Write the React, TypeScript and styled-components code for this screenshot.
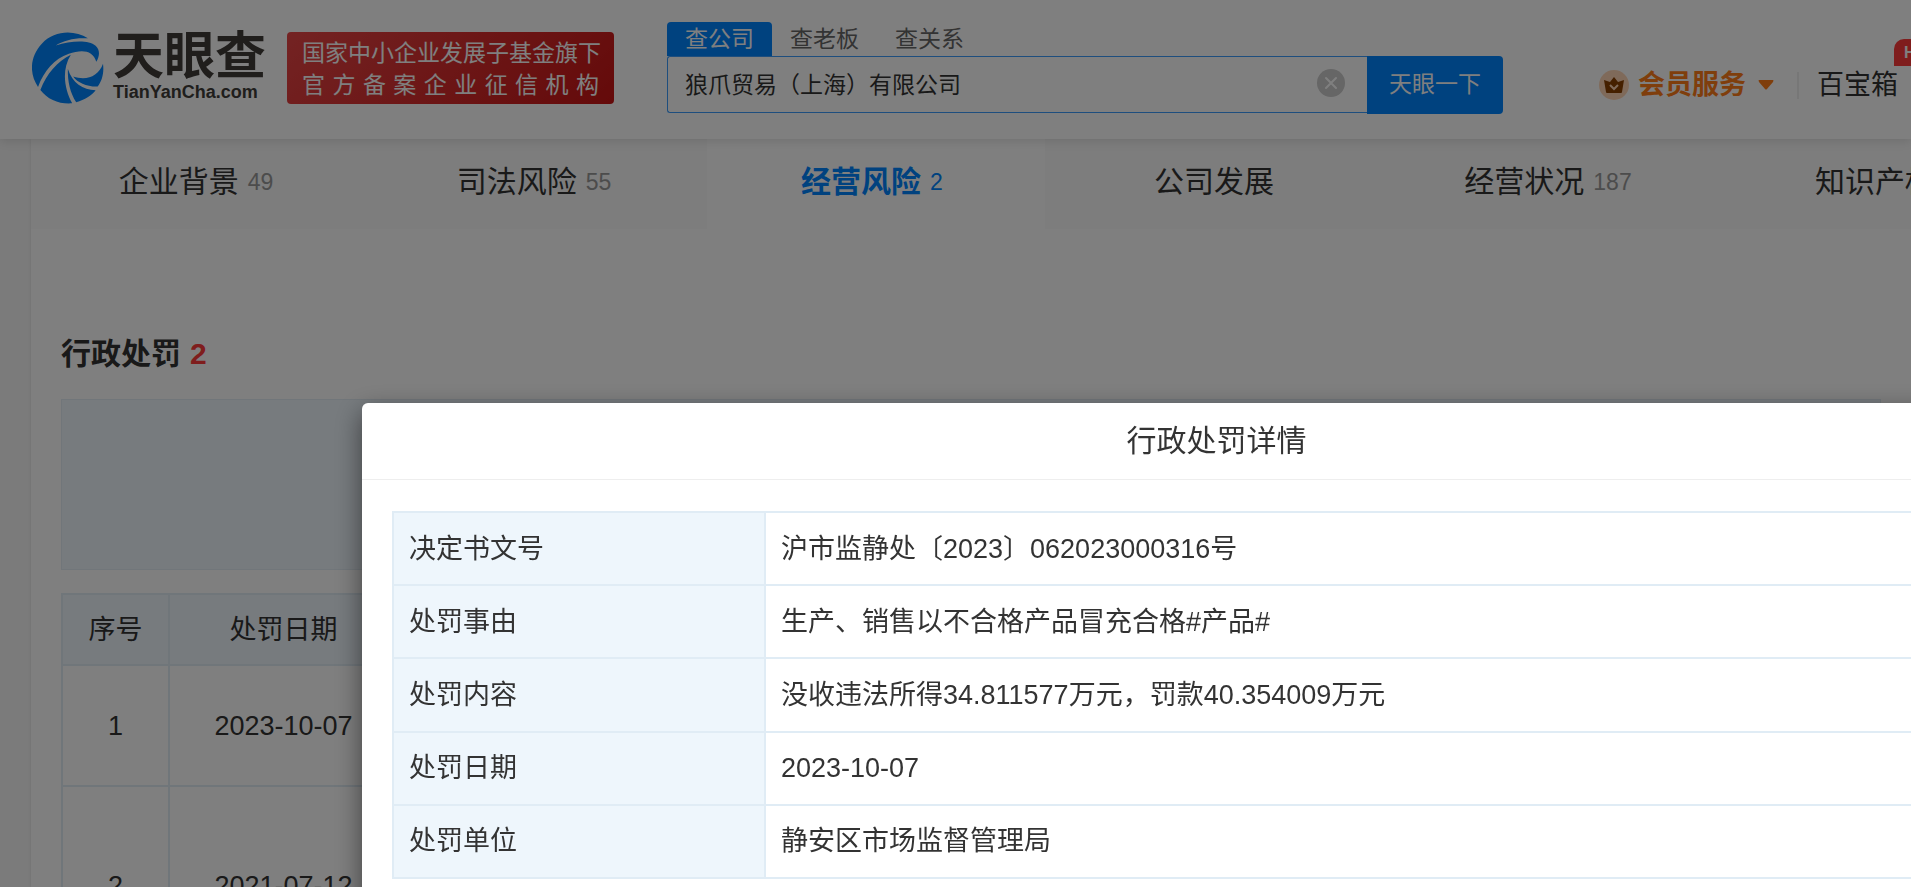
import React from "react";
import styled, { createGlobalStyle } from "styled-components";

const Global = createGlobalStyle`
  * { box-sizing: border-box; }
  html, body, #root { height: 100%; }
  body {
    margin: 0;
    overflow: hidden;
    background: #f6f6f6;
    color: #333;
    font-family: "Liberation Sans", "Noto Sans CJK SC", sans-serif;
    font-size: 27px;
    line-height: 32px;
  }
  button, input { font: inherit; color: inherit; }
  a { color: inherit; text-decoration: none; }
`;

const Page = styled.div`
  height: 100%;
  display: flex;
  flex-direction: column;
  overflow: hidden;
`;

const Header = styled.header`
  flex: none;
  display: flex;
  align-items: flex-start;
  min-width: 0;
  height: 139px;
  padding-left: 32px;
  background: #fff;
  box-shadow: 0 2px 10px rgba(0, 0, 0, 0.12);
  z-index: 1;
`;

const Logo = styled.a`
  flex: none;
  display: flex;
  gap: 9px;
  width: 236px;
  margin-top: 32px;
`;

const LogoWords = styled.span`
  display: flex;
  flex-direction: column;
  color: #403c39;
  font-weight: 700;
`;

const LogoName = styled.span`
  font-size: 51px;
  line-height: 50px;
`;

const LogoDomain = styled.span`
  font-size: 18px;
  line-height: 20px;
`;

const Slogan = styled.div`
  flex: none;
  width: 327px;
  height: 72px;
  margin: 32px 53px 0 19px;
  padding: 5px 15px;
  border-radius: 4px;
  background: linear-gradient(135deg, #e84646, #c91414);
  color: #fff;
  font-size: 23px;
  line-height: 32px;
`;

const SloganLine = styled.p`
  margin: 0;
  white-space: nowrap;
  text-align-last: justify;
`;

const Search = styled.form`
  flex: none;
  width: 836px;
  margin: 22px 0 0;
  font-size: 23px;
`;

const SearchTabs = styled.div`
  display: flex;
`;

const SearchTab = styled.button<{ $active?: boolean }>`
  width: 105px;
  height: 34px;
  padding: 0;
  border: 0;
  border-radius: 4px 4px 0 0;
  line-height: 34px;
  background: ${(p) => (p.$active ? "#0084ff" : "transparent")};
  color: ${(p) => (p.$active ? "#fff" : "#666")};
`;

const SearchRow = styled.div`
  display: flex;
  height: 58px;
`;

const Field = styled.label`
  flex: 1;
  display: flex;
  align-items: center;
  height: 57px;
  padding: 0 22px 0 17px;
  border: 1px solid #3c9dfc;
  border-right: 0;
  border-radius: 3px 0 0 3px;
`;

const FieldInput = styled.input`
  flex: 1;
  min-width: 0;
  padding: 0;
  border: 0;
  outline: 0;
  background: none;
`;

const ClearButton = styled.button`
  display: flex;
  padding: 0 0 3px;
  border: 0;
  background: none;
`;

const Submit = styled.button`
  width: 136px;
  padding: 0 0 3px;
  border: 0;
  border-radius: 0 4px 4px 0;
  background: #0084ff;
  color: #fff;
`;

const Menu = styled.nav`
  flex: none;
  display: flex;
  align-items: center;
  height: 32px;
  margin: 69px 0 0 96px;
`;

const Member = styled.a`
  display: flex;
  align-items: center;
  color: #ff7d18;
  font-weight: 700;
`;

const MemberText = styled.span`
  margin: 0 12px 0 9px;
`;

const Divider = styled.span`
  width: 2px;
  height: 27px;
  margin: 0 18px 0 23px;
  background: #eee;
`;

const Toolbox = styled.a`
  position: relative;
  white-space: nowrap;
`;

const Hot = styled.span`
  position: absolute;
  left: 77px;
  top: -30px;
  height: 27px;
  padding: 0 10px;
  border-radius: 10px 10px 10px 0;
  background: #ff3b3b;
  color: #fff;
  font-size: 16px;
  font-weight: 700;
  line-height: 28px;
`;

const Card = styled.main`
  flex: 1;
  min-height: 0;
  margin-left: 31px;
  background: #fff;
  box-shadow: 0 0 3px rgba(0, 0, 0, 0.1);
`;

const Tabs = styled.nav`
  display: flex;
  height: 90px;
  overflow: hidden;
  background: #fafafa;
`;

const Tab = styled.a<{ $active?: boolean }>`
  flex: none;
  display: flex;
  align-items: center;
  justify-content: center;
  gap: 9px;
  width: 338px;
  height: 90px;
  padding-bottom: 4px;
  font-size: 30px;
  font-weight: ${(p) => (p.$active ? 700 : 400)};
  background: ${(p) => (p.$active ? "#fff" : "transparent")};
  color: ${(p) => (p.$active ? "#0084ff" : "#333")};
`;

const TabCount = styled.span<{ $active?: boolean }>`
  margin-right: 8px;
  font-size: 23px;
  font-weight: 400;
  color: ${(p) => (p.$active ? "#0084ff" : "#999")};
`;

const Section = styled.section`
  padding: 103px 30px 0;
`;

const SectionTitle = styled.h2`
  display: flex;
  gap: 9px;
  margin: 0 0 23px;
  font-size: 30px;
  line-height: 44px;
`;

const Red = styled.span`
  color: #ff3b3b;
`;

const ChartBox = styled.div`
  height: 171px;
  margin-bottom: 23px;
  border: 1px solid #e2ecf4;
  background: #eef6fc;
`;

const List = styled.table`
  width: 100%;
  border-collapse: collapse;
  table-layout: fixed;
  text-align: center;

  th, td {
    padding: 0;
    border: 2px solid #e0ecf5;
    font-weight: 400;
  }
  th { height: 71px; background: #eef6fc; }
  th:nth-child(1) { width: 107px; }
  th:nth-child(2) { width: 229px; }
`;

const ListRow = styled.tr<{ $tall?: boolean }>`
  height: ${(p) => (p.$tall ? 200 : 121)}px;
`;

const Overlay = styled.div`
  position: fixed;
  inset: 0;
  z-index: 10;
  overflow: hidden;
  background: rgba(0, 0, 0, 0.5);
`;

const Dialog = styled.div`
  position: absolute;
  left: 362px;
  right: -160px;
  top: 403px;
  min-height: 600px;
  border-radius: 6px;
  background: #fff;
  box-shadow: 0 9px 27px rgba(0, 0, 0, 0.5);
`;

const DialogTitle = styled.h1`
  margin: 0;
  height: 77px;
  border-bottom: 1px solid #eee;
  font-size: 30px;
  font-weight: 400;
  line-height: 76px;
  text-align: center;
`;

const Details = styled.table`
  width: calc(100% - 60px);
  height: 368px;
  margin: 31px 30px;
  border-collapse: collapse;
  table-layout: fixed;
  text-align: left;

  th, td {
    padding: 0 15px;
    border: 2px solid #e0ecf5;
    font-weight: 400;
  }
  th { width: 372px; background: #eef6fc; }
`;

const tabs: { name: string; count?: number; active?: boolean }[] = [
  { name: "企业背景", count: 49 },
  { name: "司法风险", count: 55 },
  { name: "经营风险", count: 2, active: true },
  { name: "公司发展" },
  { name: "经营状况", count: 187 },
  { name: "知识产权", count: 3 },
];

const details = [
  ["决定书文号", "沪市监静处〔2023〕062023000316号"],
  ["处罚事由", "生产、销售以不合格产品冒充合格#产品#"],
  ["处罚内容", "没收违法所得34.811577万元，罚款40.354009万元"],
  ["处罚日期", "2023-10-07"],
  ["处罚单位", "静安区市场监督管理局"],
];

const LogoMark = () => (
  <svg width="72" height="72" viewBox="94 98 215 215" aria-hidden="true">
    <path
      fill="#0084ff"
      d="M261 117C220 90 160 93 124 132C86 173 86 224 112 262C130 214 160 178 204 163C240 150 276 150 286 187C296 170 298 152 284 139C262 120 210 124 165 138C190 122 225 114 261 117Z"
    />
    <path
      fill="#0084ff"
      d="M210 166C170 186 138 222 119 271C141 300 176 314 214 311C190 268 182 210 210 166Z"
    />
    <path
      fill="#0084ff"
      d="M201 208C200 246 208 280 226 308C252 300 272 288 284 272C246 272 214 250 201 208Z"
    />
    <path
      fill="#0084ff"
      d="M306 193C310 222 302 246 290 261C258 262 230 250 217 231C256 244 292 232 306 193Z"
    />
  </svg>
);

const Crown = () => (
  <svg width="30" height="30" viewBox="0 0 30 30" aria-hidden="true">
    <circle cx="15" cy="15" r="15" fill="#ffd5b5" />
    <path
      fill="#8a4000"
      d="M15 7L19 12L25 10L23 22Q23 23 22 23H8Q7 23 7 22L5 10L11 12Z"
    />
    <path d="M11 15L15 19L19 15" fill="none" stroke="#ffd5b5" strokeWidth="2" />
  </svg>
);

export default function App() {
  return (
    <>
      <Global />
      <Page>
        <Header>
          <Logo href="#">
            <LogoMark />
            <LogoWords>
              <LogoName>天眼查</LogoName>
              <LogoDomain>TianYanCha.com</LogoDomain>
            </LogoWords>
          </Logo>
          <Slogan>
            <SloganLine>国家中小企业发展子基金旗下</SloganLine>
            <SloganLine>官方备案企业征信机构</SloganLine>
          </Slogan>
          <Search>
            <SearchTabs>
              <SearchTab type="button" $active>查公司</SearchTab>
              <SearchTab type="button">查老板</SearchTab>
              <SearchTab type="button">查关系</SearchTab>
            </SearchTabs>
            <SearchRow>
              <Field>
                <FieldInput aria-label="公司名称" defaultValue="狼爪贸易（上海）有限公司" />
                <ClearButton type="button" aria-label="清除">
                  <svg width="28" height="28" viewBox="0 0 28 28" aria-hidden="true">
                    <circle cx="14" cy="14" r="14" fill="#ccc" />
                    <path d="M9 9L19 19M19 9L9 19" stroke="#fff" strokeWidth="2" strokeLinecap="round" />
                  </svg>
                </ClearButton>
              </Field>
              <Submit type="button">天眼一下</Submit>
            </SearchRow>
          </Search>
          <Menu>
            <Member href="#">
              <Crown />
              <MemberText>会员服务</MemberText>
              <svg width="16" height="10" viewBox="0 0 16 10" aria-hidden="true">
                <path fill="#ff7d18" d="M1 0H15Q16 0 15 2L9 9Q8 10 7 9L1 2Q0 0 1 0Z" />
              </svg>
            </Member>
            <Divider />
            <Toolbox href="#">
              百宝箱
              <Hot>HOT</Hot>
            </Toolbox>
          </Menu>
        </Header>
        <Card>
          <Tabs>
            {tabs.map((t) => (
              <Tab key={t.name} href="#" $active={t.active}>
                {t.name}
                {t.count && <TabCount $active={t.active}>{t.count}</TabCount>}
              </Tab>
            ))}
          </Tabs>
          <Section>
            <SectionTitle>
              行政处罚 <Red>2</Red>
            </SectionTitle>
            <ChartBox />
            <List>
              <thead>
                <tr>
                  <th>序号</th>
                  <th>处罚日期</th>
                  <th />
                </tr>
              </thead>
              <tbody>
                <ListRow>
                  <td>1</td>
                  <td>2023-10-07</td>
                  <td />
                </ListRow>
                <ListRow $tall>
                  <td>2</td>
                  <td>2021-07-12</td>
                  <td />
                </ListRow>
              </tbody>
            </List>
          </Section>
        </Card>
      </Page>
      <Overlay>
        <Dialog role="dialog" aria-modal="true" aria-labelledby="dialog-title">
          <DialogTitle id="dialog-title">行政处罚详情</DialogTitle>
          <Details>
            <tbody>
              {details.map(([label, value]) => (
                <tr key={label}>
                  <th scope="row">{label}</th>
                  <td>{value}</td>
                </tr>
              ))}
            </tbody>
          </Details>
        </Dialog>
      </Overlay>
    </>
  );
}
